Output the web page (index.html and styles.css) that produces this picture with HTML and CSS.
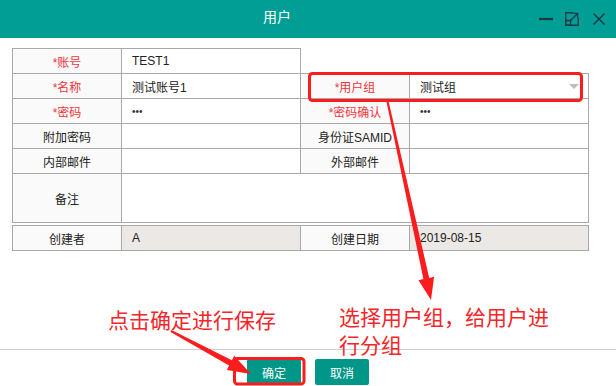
FILE: index.html
```html
<!DOCTYPE html>
<html lang="zh-CN">
<head>
<meta charset="utf-8">
<title>用户</title>
<link rel="stylesheet" href="styles.css">
</head>
<body>
<div class="dialog">
  <header class="titlebar">
    <div class="title">用户</div>
    <div class="win-icons">
      <svg class="ico" width="14" height="14" viewBox="0 0 14 14"><path d="M0 7H14" stroke="#1d3847" stroke-width="2.2" fill="none"/></svg>
      <svg class="ico" width="14" height="14" viewBox="0 0 14 14" fill="none" stroke="#1d3847" stroke-width="1.4"><path d="M8 0.7H0.7V13.3H13.3V6"/><rect x="0.7" y="8.5" width="4.8" height="4.8"/><path d="M5.5 8.5L12.6 1.4M8.2 1.4H12.6V5.8"/></svg>
      <svg class="ico close" width="14" height="14" viewBox="0 0 14 14" fill="none" stroke="#1d3847" stroke-width="1.5"><path d="M1.5 1.5L12.5 12.5M12.5 1.5L1.5 12.5"/></svg>
    </div>
  </header>

  <main class="content">
    <div class="grid">
      <div class="cell label req">*账号</div>
      <div class="cell value">TEST1</div>
      <div class="cell blank"></div>

      <div class="cell label req">*名称</div>
      <div class="cell value">测试账号1</div>
      <div class="cell label req">*用户组</div>
      <div class="cell value select">测试组<span class="caret"></span></div>

      <div class="cell label req">*密码</div>
      <div class="cell value"><span class="dots">•••</span></div>
      <div class="cell label req">*密码确认</div>
      <div class="cell value"><span class="dots">•••</span></div>

      <div class="cell label">附加密码</div>
      <div class="cell value"></div>
      <div class="cell label">身份证SAMID</div>
      <div class="cell value"></div>

      <div class="cell label">内部邮件</div>
      <div class="cell value"></div>
      <div class="cell label">外部邮件</div>
      <div class="cell value"></div>

      <div class="cell label tall">备注</div>
      <div class="cell value wide tall"></div>
    </div>

    <div class="grid meta">
      <div class="cell label">创建者</div>
      <div class="cell value ro">A</div>
      <div class="cell label">创建日期</div>
      <div class="cell value ro">2019-08-15</div>
    </div>
  </main>

  <footer class="footer">
    <button class="btn">确定</button>
    <button class="btn">取消</button>
  </footer>

  <div class="annot">
    <svg class="annot-svg" width="616" height="386" viewBox="0 0 616 386">
      <rect x="309.5" y="73.5" width="272" height="27" rx="3" fill="none" stroke="#fb1d1d" stroke-width="3"/>
      <rect x="234.5" y="358.5" width="69.5" height="25.5" rx="3" fill="none" stroke="#fb1d1d" stroke-width="3"/>
      <polygon fill="#fb1d1d" points="386,99.2 423.4,279.1 418.5,280.2 431,300 434.1,276.8 429.2,277.9 388,98.8"/>
      <polygon fill="#fb1d1d" points="171.5,330.1 231.9,360.2 234.2,355.8 251,374 226.8,370 229.1,365.6 170.5,331.9"/>
    </svg>
    <div class="note note-left">点击确定进行保存</div>
    <div class="note note-right">选择用户组，给用户进<br>行分组</div>
  </div>
</div>
</body>
</html>
```

FILE: styles.css
```css
* { box-sizing: border-box; }

html, body {
  margin: 0;
  padding: 0;
  background: #fff;
}

body {
  font-family: "Liberation Sans", "Noto Sans CJK SC", sans-serif;
  font-size: 12px;
  color: #222;
}

.dialog {
  position: relative;
  width: 616px;
  height: 386px;
  display: flex;
  flex-direction: column;
  overflow: hidden;
}

.titlebar {
  height: 38px;
  flex: none;
  background: #009e94;
  display: flex;
  align-items: flex-start;
  padding-right: 10px;
}

.title {
  margin-left: 263px;
  margin-top: 9px;
  font-family: "Noto Sans CJK SC", sans-serif;
  font-size: 14px;
  line-height: 14px;
  color: #fff;
}

.win-icons {
  margin-left: auto;
  margin-top: 12px;
  display: flex;
  gap: 12px;
}

.ico { display: block; }
.ico.close { margin-left: 1px; }

.content {
  flex: 1;
  padding: 10px 0 0 12px;
}

.grid {
  display: grid;
  grid-template-columns: 108px 178px 108px 178px;
  grid-template-rows: repeat(5, 24px) 48px;
  gap: 1px;
  padding: 1px;
  width: 577px;
  background: #a9a9a9;
}

.meta {
  grid-template-rows: 24px;
  margin-top: 2px;
}

.cell {
  display: flex;
  align-items: center;
  background: #fff;
  white-space: nowrap;
}

.label {
  justify-content: center;
  background: #fafafa;
  color: #222;
}

.label.req { color: #f2333b; }

.value { padding-left: 10px; }

.dots {
  font-size: 10px;
  color: #333;
  padding-top: 1px;
}

.blank {
  grid-column: 3 / 5;
  margin: -1px -1px 0 0;
  background: #fff;
}

.wide { grid-column: 2 / 5; }

.select { position: relative; }

.caret {
  position: absolute;
  right: 9px;
  top: 10px;
  width: 0;
  height: 0;
  border-left: 5px solid transparent;
  border-right: 5px solid transparent;
  border-top: 5px solid #bdbdbd;
}

.ro { background: #ebe8e6; }

.footer {
  flex: none;
  height: 37px;
  border-top: 1px solid #cfcfcf;
  padding-top: 9px;
  display: flex;
  justify-content: center;
  gap: 14px;
}

.btn {
  width: 54px;
  height: 26px;
  border: 0;
  border-radius: 2px;
  background: #009688;
  color: #fff;
  font-family: "Noto Sans CJK SC", sans-serif;
  font-size: 12px;
  padding: 0;
  margin: 0;
}

.annot {
  position: absolute;
  inset: 0;
  pointer-events: none;
}

.annot-svg {
  position: absolute;
  left: 0;
  top: 0;
}

.note {
  position: absolute;
  font-family: "Noto Sans CJK SC", sans-serif;
  font-size: 21px;
  line-height: 28px;
  color: #f4262a;
  white-space: nowrap;
}

.note-left { left: 108px; top: 305px; }
.note-right { left: 339px; top: 302px; }
```
